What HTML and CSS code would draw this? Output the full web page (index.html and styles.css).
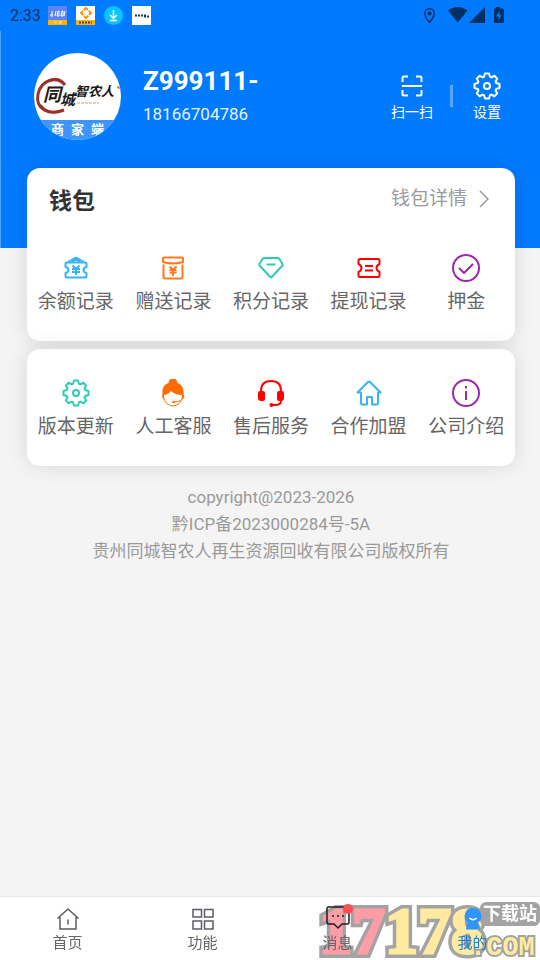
FILE: index.html
```
<!DOCTYPE html>
<html lang="zh-CN">

<head>
	<meta charset="utf-8">
	<meta name="viewport" content="width=device-width, initial-scale=1">
	<title>我的</title>

	<link rel="stylesheet" href="styles.css">
</head>

<body>

	<!-- shared icons -->
	<svg class="sprite">
		<symbol id="gear" viewBox="0 0 28 28">
			<path d="M12 1.500H16L17 4.800L18.400 5.400L21.400 3.750L24.250 6.600L22.600 9.600L23.200 11L26.500 12V16L23.200 17L22.600 18.400L24.250 21.400L21.400 24.250L18.400 22.600L17 23.200L16 26.500H12L11 23.200L9.600 22.600L6.600 24.250L3.750 21.400L5.400 18.400L4.800 17L1.500 16V12L4.800 11L5.400 9.600L3.750 6.600L6.600 3.750L9.600 5.400L11 4.800Z"/>
			<circle cx="14" cy="14" r="3"/>
		</symbol>
	</svg>

	<header class="hero">
		<div class="status">
			<span class="time">2:33</span>
			<svg class="app" viewBox="0 0 19 19">
				<path fill="#5b85ff" d="M0 0h19v19H0z"/>
				<path fill="#ffb400" d="M0 14h19v5H0z"/>
				<path d="M2 9h3M4 5v6M8 5l-1 5M11 5h-1l-1 5h2zM15 5h-1l-1 5h2zM16 10l1-5" fill="none" stroke="#fff"/>
				<path d="M6 16h3M11 16h3M12 15v3" stroke="#fff"/>
			</svg>
			<svg class="app" viewBox="0 0 19 19">
				<path fill="#fff" d="M0 0h19v19H0z"/>
				<path fill="#f7b318" d="M0 14h19v5H0z"/>
				<path d="M10 2l5 5-5 5-5-5z" fill="none" stroke="#f39a0b" stroke-width="2" stroke-dasharray="6 1" stroke-dashoffset="3"/>
				<path d="M3 16.500h13" stroke="#5c4308" stroke-width="2" stroke-dasharray="2 1"/>
			</svg>
			<svg class="app" viewBox="0 0 19 19">
				<circle cx="9.500" cy="9.500" r="9.500" fill="#0ac4ff"/>
				<path d="M9.500 4v8M6 9l3.500 3.500L13 9M6 14.500h7" fill="none" stroke="#fff" stroke-width="1.500"/>
			</svg>
			<svg class="app" viewBox="0 0 19 19">
				<path fill="#fff" d="M0 0h19v19H0z"/>
				<path d="M3 9.500h11M12 10.500h5" stroke="#17365e" stroke-width="2" stroke-dasharray="2 1"/>
			</svg>
			<svg class="system" viewBox="0 0 84 20" fill="#023064">
				<path d="M9.500 2a5.500 5.500 0 0 0-5.500 5.500c0 4 5.500 10 5.500 10s5.500-6 5.500-10A5.500 5.500 0 0 0 9.500 2zm0 1.500a4 4 0 0 1 4 4c0 2.500-2.700 6-4 7.600-1.300-1.600-4-5.100-4-7.600a4 4 0 0 1 4-4z"/>
				<circle cx="9.500" cy="7.500" r="2"/>
				<path d="M28 4.500C34-.2 41.500-.2 47.500 4.500L37.700 16.500z"/>
				<path d="M49 17L65 1v16z"/>
				<path fill-rule="evenodd" d="M74 2.500h2V1h4v1.500h2q2 0 2 1.500v11.500q0 1.500-1.500 1.500h-7q-1.500 0-1.500-1.500zM79.500 5L76 10.500h2.500v4l3-5.500h-2z"/>
			</svg>
		</div>

		<div class="profile">
			<svg class="avatar" viewBox="0 0 87 87" role="img" aria-label="同城智农人">
				<clipPath id="round"><circle cx="43.500" cy="43.500" r="43.500"/></clipPath>
				<g clip-path="url(#round)">
					<path fill="#fff" d="M0 0h87v87H0z"/>
					<path fill="#3e95ff" d="M0 67h87v20H0z"/>
					<path d="M31 32C23 22 7 27 4 41c-3 15 11 22 26 16" fill="none" stroke="#9d3027" stroke-width="3"/>
					<path d="M28 28c-7-4-15-1-19 4M7 52c4 7 12 8 17 7" fill="none" stroke="#9d3027" stroke-width="2"/>
					<path d="M83 34h2v2" fill="none" stroke="#b33"/>
					<path d="M43 50h22" stroke="#c9a173" stroke-dasharray="3 1"/>
					<text class="brush large" x="9" y="48">同</text>
					<text class="brush middle" x="26" y="52">城</text>
					<text class="brush small" x="41" y="43">智农人</text>
					<text class="shop" x="17" y="81">商</text>
					<text class="shop" x="37" y="81">家</text>
					<text class="shop" x="57" y="81">端</text>
				</g>
			</svg>
			<div class="user">
				<h1>Z999111-</h1>
				<p>18166704786</p>
			</div>
			<div class="actions">
				<button type="button">
					<svg class="icon" viewBox="0 0 28 28">
						<path d="M4.500 10V6q0-1.500 1.500-1.500h4M18 4.500h4q1.500 0 1.500 1.500v4M4.500 18v4q0 1.500 1.500 1.500h4M18 23.500h4q1.500 0 1.500-1.500v-4M4 14h20"/>
					</svg>
					<span>扫一扫</span>
				</button>
				<i class="divider"></i>
				<button type="button">
					<svg class="icon"><use href="#gear"/></svg>
					<span>设置</span>
				</button>
			</div>
		</div>
	</header>

	<main>
		<section class="card">
			<div class="card-head">
				<h2>钱包</h2>
				<a href="#wallet">钱包详情
					<svg class="arrow" viewBox="0 0 10 18"><path d="M1 1l8 8-8 8"/></svg>
				</a>
			</div>
			<div class="grid">
				<a href="#balance">
					<svg class="icon sky" viewBox="0 0 28 28">
						<path d="M5 8.500h18q1.500 0 1.500 1.500v3q-3 .5-3 3t3 3v3q0 1.500-1.500 1.500H5Q3.500 23.500 3.500 22v-3q3-.5 3-3t-3-3v-3Q3.500 8.500 5 8.500z"/>
						<path d="M6 8l7-4q1-.5 2 0l7 4M10 8l4-3 4 3"/>
						<path d="M10.500 11.500l3.500 3.500 3.500-3.500M10 15h8M10 18h8M14 15v6"/>
					</svg>
					<span>余额记录</span>
				</a>
				<a href="#gifts">
					<svg class="icon orange" viewBox="0 0 28 28">
						<path d="M5 3.500h18q1 0 1 1V8q-10 3-20 0V4.500q0-1 1-1z"/>
						<path d="M4.500 10.500V23q0 1.500 1.500 1.500h16q1.500 0 1.500-1.500V10.500"/>
						<path d="M10.500 12.500L14 16l3.500-3.500M10.500 16h7M10.500 18.500h7M14 16v6"/>
					</svg>
					<span>赠送记录</span>
				</a>
				<a href="#points">
					<svg class="icon green" viewBox="0 0 28 28">
						<path d="M7 4h14q1 0 1.500 1l3 5q.5 1-.2 1.700L14.700 23q-.7.800-1.400 0L2.700 11.700Q2 11 2.500 10l3-5Q6 4 7 4zM9.500 10.500h9"/>
					</svg>
					<span>积分记录</span>
				</a>
				<a href="#withdraw">
					<svg class="icon red" viewBox="0 0 28 28">
						<path d="M5 5h18q1.500 0 1.500 1.500V10q-3 1.500-3 4t3 4v3.500q0 1.500-1.500 1.500H5q-1.500 0-1.500-1.500V18q3-1.500 3-4t-3-4V6.500Q3.500 5 5 5zM10 12h8M10 16.500h8"/>
					</svg>
					<span>提现记录</span>
				</a>
				<a href="#deposit">
					<svg class="icon purple" viewBox="0 0 28 28">
						<circle cx="14" cy="14" r="13"/>
						<path d="M7 14l5 5 9-9"/>
					</svg>
					<span>押金</span>
				</a>
			</div>
		</section>

		<section class="card services">
			<div class="grid">
				<a href="#version">
					<svg class="icon green"><use href="#gear"/></svg>
					<span>版本更新</span>
				</a>
				<a href="#support">
					<svg class="icon solid" viewBox="0 0 28 28">
						<path d="M9.500 4a4.500 4.500 0 0 1 9 0c5 2 6.500 6 6 12q1.500 1 .5 3l-2 1v-4q-7 0-11-4-2 3-7 4v4q-2-.5-2-3l.5-2C3 9 5 5.500 9.500 4z"/>
						<path d="M4.500 17c1 13 18 13 19 0M23 20c-2 2-4 3-8 3" fill="none" stroke="#ff6b00"/>
						<circle cx="14.500" cy="23" r="1.300"/>
					</svg>
					<span>人工客服</span>
				</a>
				<a href="#aftersale">
					<svg class="icon red" viewBox="0 0 28 28">
						<path d="M4 14v-2q0-10 10-10t10 10v2M24 20v2q0 4-6 4h-3"/>
						<path d="M3 12h3q2 0 2 2v6q0 2-2 2H4q-3 0-3-3v-5q0-2 2-2zM22 12h3q2 0 2 2v5q0 3-3 3h-2q-2 0-2-2v-6q0-2 2-2z" fill="#f00" stroke="none"/>
						<circle cx="14.500" cy="26" r="2" fill="#f00" stroke="none"/>
					</svg>
					<span>售后服务</span>
				</a>
				<a href="#partner">
					<svg class="icon sky" viewBox="0 0 28 28">
						<path d="M13 3q1-.8 2 0l10.500 10.500H23V24q0 1.500-1.500 1.500H17V18h-5v7.500H7.500Q6 25.500 6 24V13.500H2.500z"/>
					</svg>
					<span>合作加盟</span>
				</a>
				<a href="#about">
					<svg class="icon purple" viewBox="0 0 28 28">
						<circle cx="14" cy="14" r="13"/>
						<path d="M14 12v9M14 7v2.500"/>
					</svg>
					<span>公司介绍</span>
				</a>
			</div>
		</section>

		<footer>
			<p>copyright@2023-2026</p>
			<p>黔ICP备2023000284号-5A</p>
			<p>贵州同城智农人再生资源回收有限公司版权所有</p>
		</footer>
	</main>

	<nav class="tabbar">
		<div class="watermark">
			<svg viewBox="0 0 224 62">
				<text class="digits outline" x="3" y="55">17178</text>
				<text class="digits" x="3" y="55"><tspan fill="#ff9da6" stroke="#ff9da6">17</tspan>178</text>
				<rect x="164" y="4" width="60" height="24" rx="6" fill="#a3a3a3"/>
				<text class="domain" x="154" y="57">.COM</text>
				<text class="station" x="167" y="22">下载站</text>
			</svg>
		</div>
		<a href="#home">
			<svg class="tab-icon" viewBox="0 0 24 24"><path d="M1.500 11.500L12 2l10.500 9.500M4 10v12h16V10M12 12.500v5"/></svg>
			<span>首页</span>
		</a>
		<a href="#features">
			<svg class="tab-icon" viewBox="0 0 24 24"><path d="M2 2.500h8.500V10H2zM13.500 2.500H22V10h-8.500zM2 14h8.500v8H2zM13.500 14H22v8h-8.500z"/></svg>
			<span>功能</span>
		</a>
		<a href="#messages" class="dark">
			<svg class="tab-icon" viewBox="0 0 24 24">
				<path d="M2.500 0h19Q23 0 23 1.500v14q0 1.500-1.500 1.500H16l-4 4-4-4H2.500Q1 17 1 15.500v-14Q1 0 2.500 0z"/>
				<path d="M6 9h2M11 9h2M16 9h2"/>
				<circle cx="22" cy="2" r="5" fill="#ff4d55" stroke="none"/>
			</svg>
			<span>消息</span>
		</a>
		<a href="#me" class="active">
			<svg class="tab-icon" viewBox="0 0 24 24">
				<path d="M12 1a8 8 0 0 1 5 14.500q2 3 2 7H5q0-4 2-7A8 8 0 0 1 12 1z" fill="#3094ff" stroke="none"/>
				<path d="M8.500 11q3.500 3.500 7 0" stroke="#fff"/>
			</svg>
			<span>我的</span>
		</a>
	</nav>

</body>

</html>
```
FILE: styles.css
```
* {
	box-sizing: border-box;
}

body {
	margin: 0;
	min-height: 100vh;
	display: flex;
	flex-direction: column;
	background: #f4f4f4;
	color: #666;
	font-family: Roboto, "Noto Sans CJK SC", sans-serif;
}

h1, h2, p {
	margin: 0;
}

a {
	color: inherit;
	text-decoration: none;
}

.sprite {
	display: none;
}

.hero {
	background: #007aff;
	color: white;
}

.status {
	display: flex;
	align-items: center;
	gap: 9px;
	height: 31px;
	padding: 0 36px 0 10px;
}

.time {
	color: #023064;
	font-size: 16px;
	width: 29px;
}

.app {
	width: 19px;
	height: 19px;
}

.system {
	width: 84px;
	height: 20px;
	margin-left: auto;
}

.profile {
	display: flex;
	padding: 22px 36px 108px 33px;
	border-left: 1px solid #4ca2ff;
}

.avatar {
	width: 87px;
	height: 87px;
}

.brush {
	fill: #211918;
	font-weight: bold;
	font-style: italic;
}

.large {
	font-size: 18px;
}

.middle {
	font-size: 15px;
}

.small {
	font-size: 13px;
}

.shop {
	fill: white;
	font-size: 13px;
	font-weight: bold;
}

.user {
	padding: 12px 0 0 22px;
}

.user h1 {
	font-size: 26px;
	line-height: 32px;
}

.user p {
	font-size: 17px;
	line-height: 34px;
	opacity: 0.9;
}

.actions {
	display: flex;
	align-items: flex-start;
	gap: 17px;
	margin-left: auto;
	padding-top: 19px;
}

.actions button {
	display: flex;
	flex-direction: column;
	align-items: center;
	gap: 1px;
	padding: 0;
	border: none;
	background: none;
	color: white;
	font-family: inherit;
	font-size: 14px;
	line-height: 22px;
	min-width: 34px;
}

.divider {
	width: 3px;
	height: 22px;
	margin-top: 13px;
	background: #59a9ff;
}

.icon {
	width: 28px;
	height: 28px;
	fill: none;
	stroke: currentColor;
	stroke-width: 2;
	stroke-linejoin: round;
}

.solid {
	fill: #ff6b00;
	stroke: none;
}

.solid path {
	stroke-width: 1px;
}

main {
	flex: 1;
	margin-top: -80px;
	padding: 0 25px 0 27px;
}

.card {
	height: 173px;
	margin-bottom: 8px;
	padding-top: 15px;
	background: white;
	border-radius: 13px;
	box-shadow: 0 0 20px rgba(0, 0, 0, 0.12);
}

.services {
	height: 117px;
	padding-top: 30px;
	margin-bottom: 18px;
}

.card-head {
	display: flex;
	align-items: center;
	justify-content: space-between;
	height: 32px;
	margin-bottom: 39px;
	padding: 0 26px 0 22px;
}

.card-head h2 {
	color: #333;
	font-size: 23px;
}

.card-head a {
	display: flex;
	align-items: center;
	gap: 12px;
	color: #999;
	font-size: 19px;
	line-height: 28px;
}

.arrow {
	width: 10px;
	height: 18px;
	fill: none;
	stroke: #999;
	stroke-width: 1.5;
}

.grid {
	display: grid;
	grid-template-columns: repeat(5, 1fr);
}

.grid a {
	display: flex;
	flex-direction: column;
	align-items: center;
	gap: 6px;
	font-size: 19px;
	line-height: 28px;
}

.grid span {
	color: #666;
}

.sky {
	color: #39b3f5;
}

.orange {
	color: #ff781f;
}

.green {
	color: #2dcdb5;
}

.red {
	color: #f00;
}

.purple {
	color: #9c27b0;
}

footer {
	color: #999;
	text-align: center;
	font-size: 17px;
	line-height: 27px;
}

.tabbar {
	position: sticky;
	bottom: 0;
	display: flex;
	height: 64px;
	background: white;
	border-top: 1px solid #e8e8e8;
}

.tabbar a {
	position: relative;
	flex: 1;
	display: flex;
	flex-direction: column;
	align-items: center;
	padding-top: 10px;
	font-size: 15px;
	line-height: 24px;
}

.tab-icon {
	width: 24px;
	height: 24px;
	fill: none;
	stroke: #5c5c64;
	stroke-width: 1.5;
	overflow: visible;
}

.dark .tab-icon {
	stroke: #2a1a1c;
}

.active {
	color: #1680d8;
}

/* site mark under the tab labels */
.watermark {
	position: absolute;
	right: 0;
	bottom: 0;
	width: 224px;
	height: 62px;
}

.watermark svg {
	overflow: visible;
}

.watermark text {
	font-weight: bold;
	paint-order: stroke;
	stroke-linejoin: miter;
}

.digits {
	fill: #ffeaa0;
	stroke: #ffeaa0;
	stroke-width: 3px;
	font-family: "Liberation Serif", serif;
	font-size: 66px;
}

.outline {
	fill: #a3a3a3;
	stroke: #a3a3a3;
	stroke-width: 10px;
}

.domain {
	fill: #ffeaa0;
	stroke: #a3a3a3;
	stroke-width: 4px;
	font-family: "Liberation Mono", monospace;
	font-size: 27px;
}

.station {
	fill: white;
	font-size: 18px;
}
```
